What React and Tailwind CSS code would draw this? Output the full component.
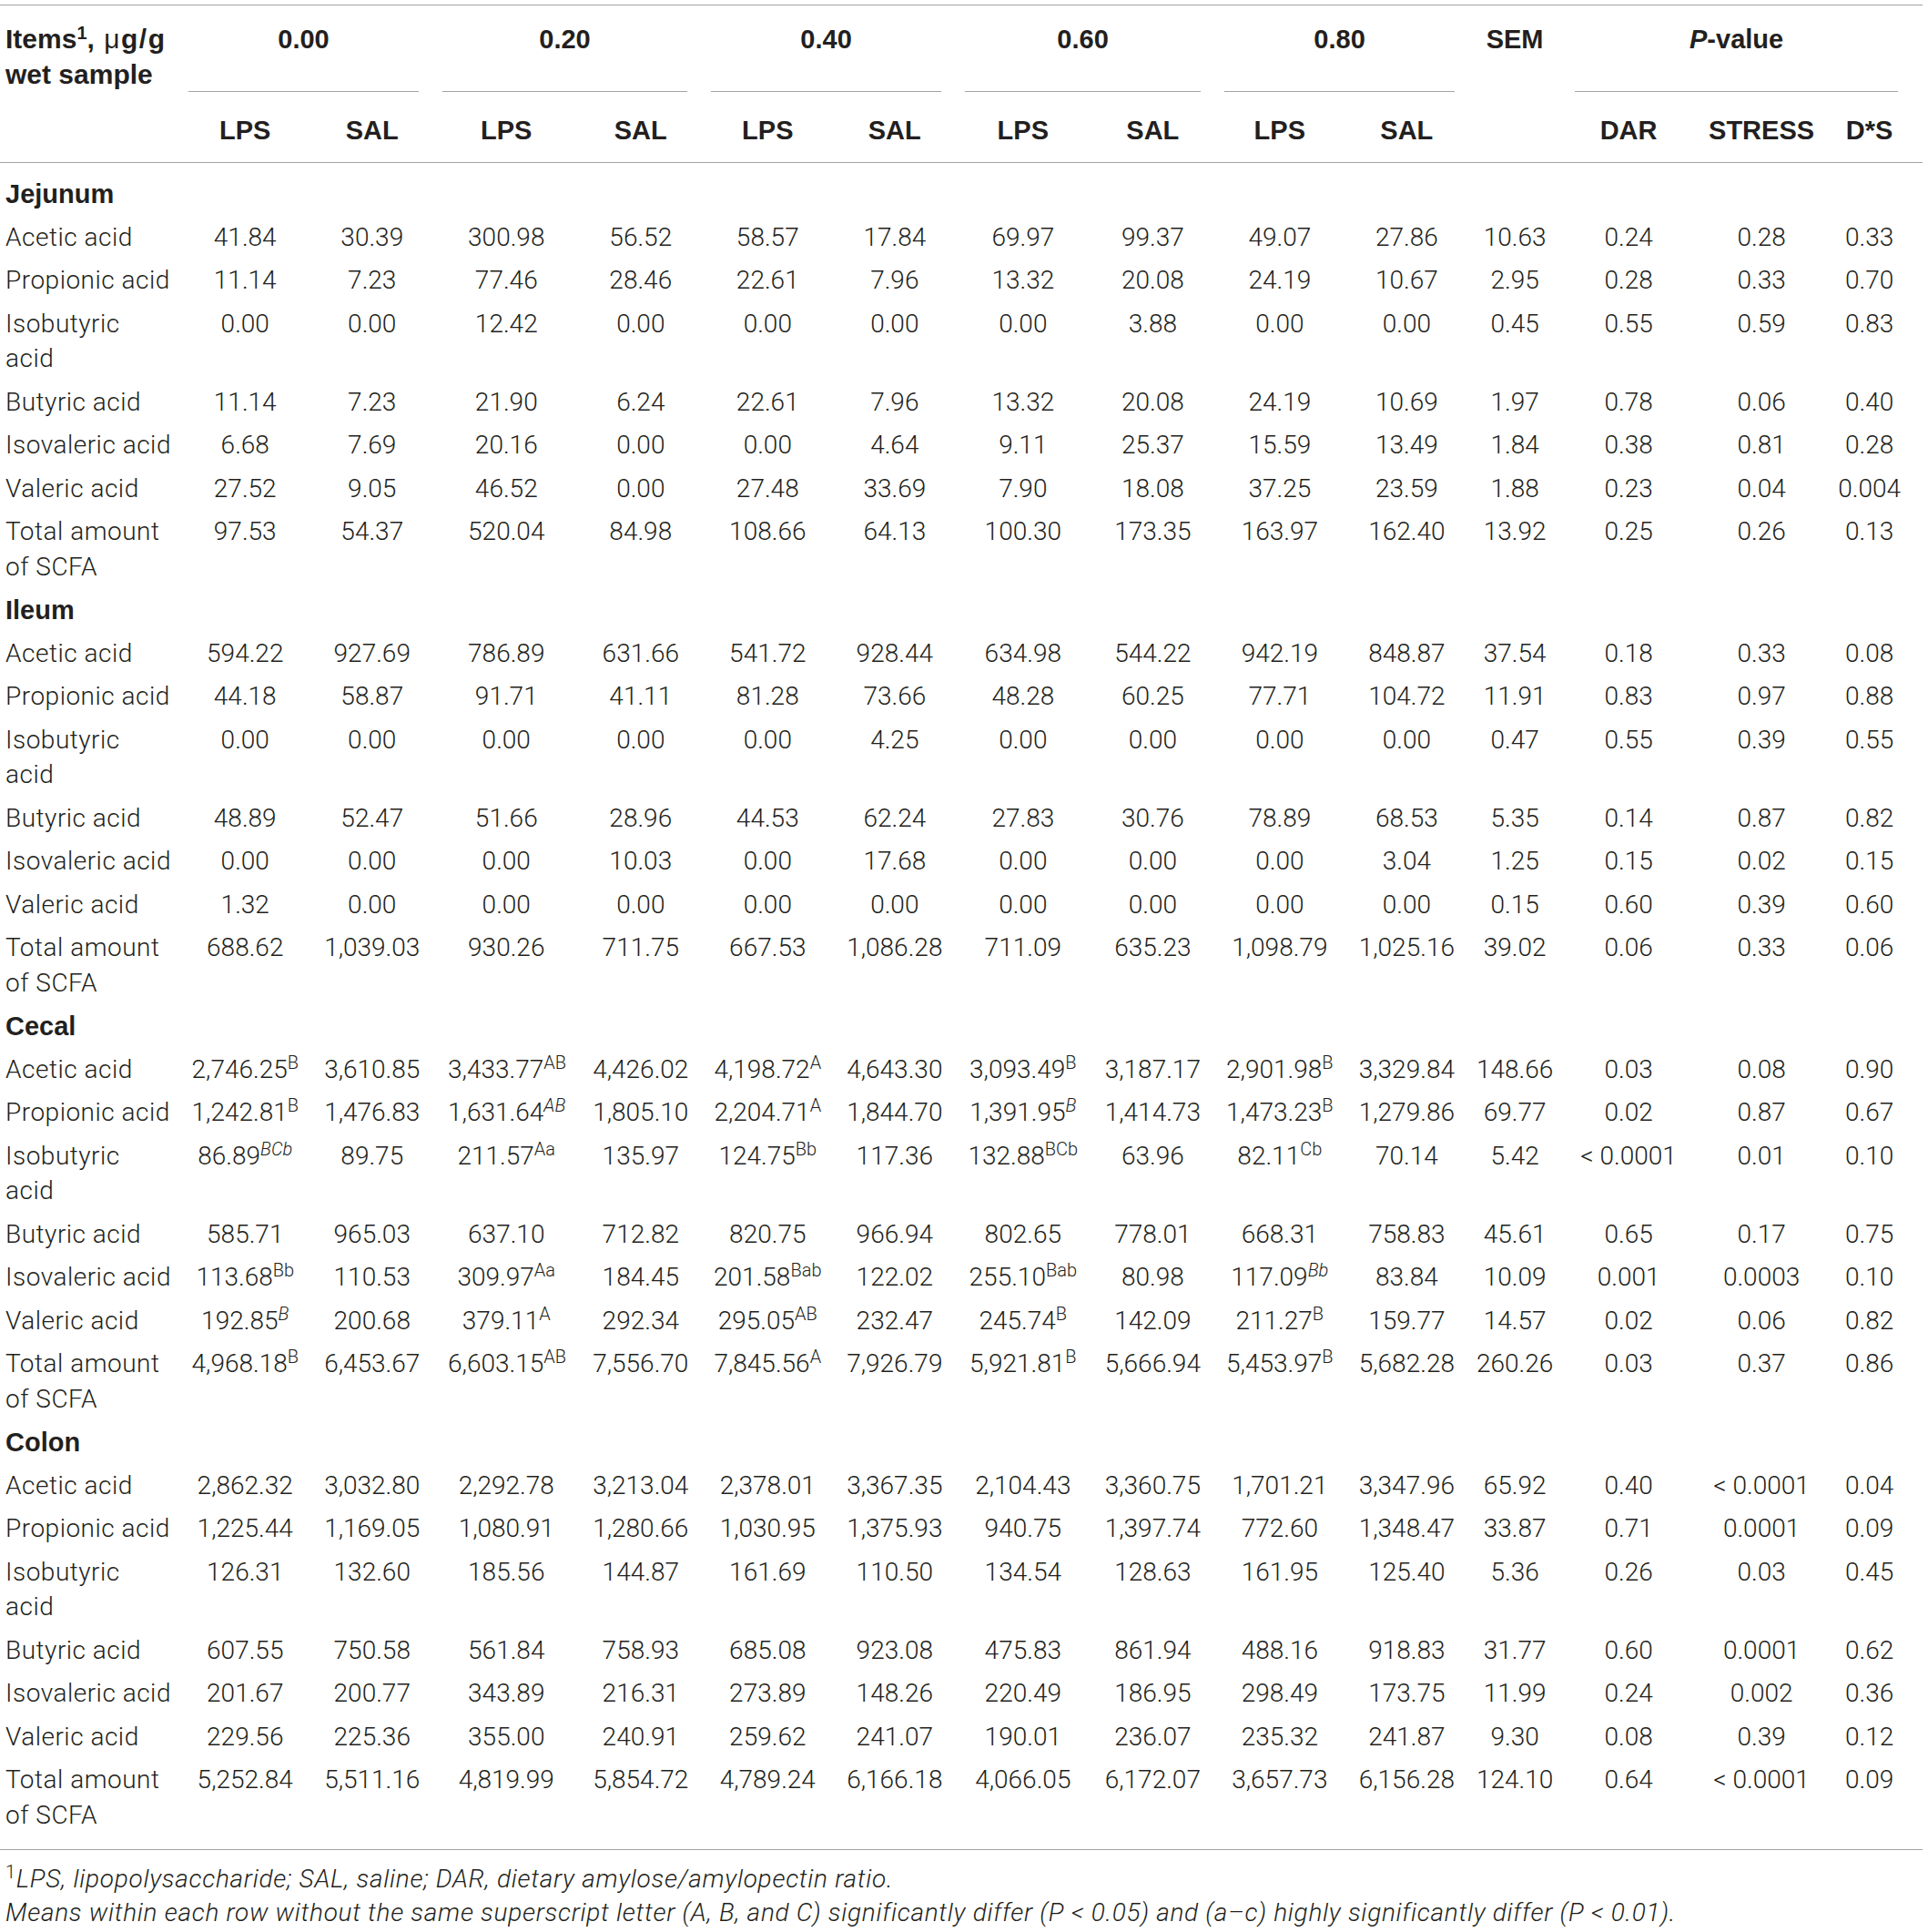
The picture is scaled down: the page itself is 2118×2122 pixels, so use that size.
import React from "react";

const sections = [
  {
    name: "Jejunum",
    rows: [
      ["Acetic acid", "41.84 30.39 300.98 56.52 58.57 17.84 69.97 99.37 49.07 27.86 10.63 0.24 0.28 0.33"],
      ["Propionic acid", "11.14 7.23 77.46 28.46 22.61 7.96 13.32 20.08 24.19 10.67 2.95 0.28 0.33 0.70"],
      ["Isobutyric|acid", "0.00 0.00 12.42 0.00 0.00 0.00 0.00 3.88 0.00 0.00 0.45 0.55 0.59 0.83"],
      ["Butyric acid", "11.14 7.23 21.90 6.24 22.61 7.96 13.32 20.08 24.19 10.69 1.97 0.78 0.06 0.40"],
      ["Isovaleric acid", "6.68 7.69 20.16 0.00 0.00 4.64 9.11 25.37 15.59 13.49 1.84 0.38 0.81 0.28"],
      ["Valeric acid", "27.52 9.05 46.52 0.00 27.48 33.69 7.90 18.08 37.25 23.59 1.88 0.23 0.04 0.004"],
      ["Total amount|of SCFA", "97.53 54.37 520.04 84.98 108.66 64.13 100.30 173.35 163.97 162.40 13.92 0.25 0.26 0.13"],
    ],
  },
  {
    name: "Ileum",
    rows: [
      ["Acetic acid", "594.22 927.69 786.89 631.66 541.72 928.44 634.98 544.22 942.19 848.87 37.54 0.18 0.33 0.08"],
      ["Propionic acid", "44.18 58.87 91.71 41.11 81.28 73.66 48.28 60.25 77.71 104.72 11.91 0.83 0.97 0.88"],
      ["Isobutyric|acid", "0.00 0.00 0.00 0.00 0.00 4.25 0.00 0.00 0.00 0.00 0.47 0.55 0.39 0.55"],
      ["Butyric acid", "48.89 52.47 51.66 28.96 44.53 62.24 27.83 30.76 78.89 68.53 5.35 0.14 0.87 0.82"],
      ["Isovaleric acid", "0.00 0.00 0.00 10.03 0.00 17.68 0.00 0.00 0.00 3.04 1.25 0.15 0.02 0.15"],
      ["Valeric acid", "1.32 0.00 0.00 0.00 0.00 0.00 0.00 0.00 0.00 0.00 0.15 0.60 0.39 0.60"],
      ["Total amount|of SCFA", "688.62 1,039.03 930.26 711.75 667.53 1,086.28 711.09 635.23 1,098.79 1,025.16 39.02 0.06 0.33 0.06"],
    ],
  },
  {
    name: "Cecal",
    rows: [
      ["Acetic acid", "2,746.25^B 3,610.85 3,433.77^AB 4,426.02 4,198.72^A 4,643.30 3,093.49^B 3,187.17 2,901.98^B 3,329.84 148.66 0.03 0.08 0.90"],
      ["Propionic acid", "1,242.81^B 1,476.83 1,631.64^_AB 1,805.10 2,204.71^A 1,844.70 1,391.95^_B 1,414.73 1,473.23^B 1,279.86 69.77 0.02 0.87 0.67"],
      ["Isobutyric|acid", "86.89^_BCb 89.75 211.57^Aa 135.97 124.75^Bb 117.36 132.88^BCb 63.96 82.11^Cb 70.14 5.42 <~0.0001 0.01 0.10"],
      ["Butyric acid", "585.71 965.03 637.10 712.82 820.75 966.94 802.65 778.01 668.31 758.83 45.61 0.65 0.17 0.75"],
      ["Isovaleric acid", "113.68^Bb 110.53 309.97^Aa 184.45 201.58^Bab 122.02 255.10^Bab 80.98 117.09^_Bb 83.84 10.09 0.001 0.0003 0.10"],
      ["Valeric acid", "192.85^_B 200.68 379.11^A 292.34 295.05^AB 232.47 245.74^B 142.09 211.27^B 159.77 14.57 0.02 0.06 0.82"],
      ["Total amount|of SCFA", "4,968.18^B 6,453.67 6,603.15^AB 7,556.70 7,845.56^A 7,926.79 5,921.81^B 5,666.94 5,453.97^B 5,682.28 260.26 0.03 0.37 0.86"],
    ],
  },
  {
    name: "Colon",
    rows: [
      ["Acetic acid", "2,862.32 3,032.80 2,292.78 3,213.04 2,378.01 3,367.35 2,104.43 3,360.75 1,701.21 3,347.96 65.92 0.40 <~0.0001 0.04"],
      ["Propionic acid", "1,225.44 1,169.05 1,080.91 1,280.66 1,030.95 1,375.93 940.75 1,397.74 772.60 1,348.47 33.87 0.71 0.0001 0.09"],
      ["Isobutyric|acid", "126.31 132.60 185.56 144.87 161.69 110.50 134.54 128.63 161.95 125.40 5.36 0.26 0.03 0.45"],
      ["Butyric acid", "607.55 750.58 561.84 758.93 685.08 923.08 475.83 861.94 488.16 918.83 31.77 0.60 0.0001 0.62"],
      ["Isovaleric acid", "201.67 200.77 343.89 216.31 273.89 148.26 220.49 186.95 298.49 173.75 11.99 0.24 0.002 0.36"],
      ["Valeric acid", "229.56 225.36 355.00 240.91 259.62 241.07 190.01 236.07 235.32 241.87 9.30 0.08 0.39 0.12"],
      ["Total amount|of SCFA", "5,252.84 5,511.16 4,819.99 5,854.72 4,789.24 6,166.18 4,066.05 6,172.07 3,657.73 6,156.28 124.10 0.64 <~0.0001 0.09"],
    ],
  },
];

const groups = ["0.00", "0.20", "0.40", "0.60", "0.80"];

// left padding per value column, nudging LPS/SAL centres to the reference
const colPad = [
  "pl-[11px]", "pl-[11px]",
  "pl-[19px]", "pl-[19px]",
  "pl-[11px]", "pl-[11px]",
  "pl-[11px]", "pl-[11px]",
  "pl-[8px]", "pl-[8px]",
  "", "", "", "pr-[14px]",
];

function Value({ v }) {
  const text = v.replace("~", " ");
  const idx = text.indexOf("^");
  if (idx === -1) return <>{text}</>;
  const num = text.slice(0, idx);
  let sup = text.slice(idx + 1);
  let italic = false;
  if (sup.startsWith("_")) {
    italic = true;
    sup = sup.slice(1);
  }
  return (
    <>
      {num}
      <sup className={"text-[20px] " + (italic ? "italic" : "")}>{sup}</sup>
    </>
  );
}

const bold = "font-['Liberation_Sans',Arial,sans-serif] font-bold text-[29px]";
const line = "border-[#a3a3a3]";

export default function App() {
  return (
    <div className="w-[2118px] min-h-[2122px] bg-white text-[#231f20] font-['Roboto',sans-serif] font-light text-[28px]">
      <table className="mt-[5px] w-[2112px] table-fixed border-separate border-spacing-0">
        <colgroup>
          <col className="w-[194px]" />
          <col className="w-[139.5px]" />
          <col className="w-[139.5px]" />
          <col className="w-[147.5px]" />
          <col className="w-[147.5px]" />
          <col className="w-[139.5px]" />
          <col className="w-[139.5px]" />
          <col className="w-[142.5px]" />
          <col className="w-[142.5px]" />
          <col className="w-[139.5px]" />
          <col className="w-[139.5px]" />
          <col className="w-[106px]" />
          <col className="w-[144px]" />
          <col className="w-[148px]" />
          <col className="w-[103px]" />
        </colgroup>
        <thead className={bold}>
          <tr>
            <th className={`border-t ${line} text-left align-top pt-[18px] pl-[6px] leading-[38.5px] font-bold whitespace-nowrap text-[30px]`}>
              Items<sup className="text-[20px]">1</sup>,{" "}
              <span className="tracking-[1.5px]">
                <span className="font-normal ml-[2px]">μ</span>g/g
              </span>
              <br />
              wet sample
            </th>
            {groups.map((g) => (
              <th key={g} colSpan={2} className={`border-t ${line} align-top pt-[18px] px-[13px] font-bold`}>
                <div className={`h-[77px] border-b ${line} leading-[38.5px]`}>{g}</div>
              </th>
            ))}
            <th className={`border-t ${line} align-top pt-[18px] leading-[38.5px] font-bold`}>SEM</th>
            <th colSpan={3} className={`border-t ${line} align-top pt-[18px] pl-[13px] pr-[27px] font-bold`}>
              <div className={`h-[77px] border-b ${line} leading-[38.5px]`}>
                <span className="italic">P</span>-value
              </div>
            </th>
          </tr>
          <tr>
            <th className={`border-b ${line}`} />
            {groups.map((g, gi) => (
              <React.Fragment key={g}>
                <th className={`border-b ${line} pt-[23px] pb-[15px] leading-[38.5px] font-bold ${colPad[gi * 2]}`}>LPS</th>
                <th className={`border-b ${line} pt-[23px] pb-[15px] leading-[38.5px] font-bold ${colPad[gi * 2 + 1]}`}>SAL</th>
              </React.Fragment>
            ))}
            <th className={`border-b ${line}`} />
            <th className={`border-b ${line} pt-[23px] pb-[15px] leading-[38.5px] font-bold`}>DAR</th>
            <th className={`border-b ${line} pt-[23px] pb-[15px] leading-[38.5px] font-bold`}>STRESS</th>
            <th className={`border-b ${line} pt-[23px] pb-[15px] pr-[14px] leading-[38.5px] font-bold`}>D*S</th>
          </tr>
        </thead>
        <tbody>
          <tr>
            <td colSpan={15} className="h-[11px] p-0" />
          </tr>
          {sections.map((s) => (
            <React.Fragment key={s.name}>
              <tr>
                <td colSpan={15} className={`${bold} text-left pl-[6px] py-[4.5px] leading-[38.5px]`}>
                  {s.name}
                </td>
              </tr>
              {s.rows.map(([label, vals]) => {
                const parts = label.split("|");
                const values = vals.split(" ");
                return (
                  <tr key={label}>
                    <td className="align-top text-left pl-[6px] py-[4.5px] leading-[38.5px] whitespace-nowrap tracking-[0.5px]">
                      {parts.map((p, i) => (
                        <React.Fragment key={i}>
                          {i > 0 && <br />}
                          {p}
                        </React.Fragment>
                      ))}
                    </td>
                    {values.map((v, i) => (
                      <td
                        key={i}
                        className={`align-top text-center py-[4.5px] leading-[38.5px] whitespace-nowrap ${colPad[i]}`}
                      >
                        <Value v={v} />
                      </td>
                    ))}
                  </tr>
                );
              })}
            </React.Fragment>
          ))}
          <tr>
            <td colSpan={15} className={`h-[14px] p-0 border-b ${line}`} />
          </tr>
        </tbody>
      </table>
      <div className="pt-[13px] pl-[6px] leading-[37px] italic whitespace-nowrap tracking-[0.7px]">
        <div>
          <sup className="text-[20px] not-italic">1</sup>LPS, lipopolysaccharide; SAL, saline; DAR, dietary amylose/amylopectin ratio.
        </div>
        <div>
          Means within each row without the same superscript letter (A, B, and C) significantly differ (P &lt; 0.05) and (a–c) highly significantly differ (P &lt; 0.01).
        </div>
      </div>
    </div>
  );
}
